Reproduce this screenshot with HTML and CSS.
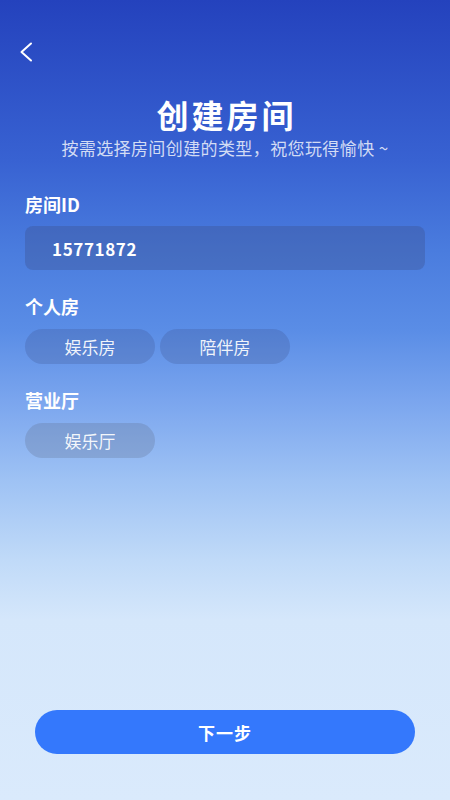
FILE: index.html
```html
<!DOCTYPE html>
<html lang="zh-CN">
<head>
<meta charset="utf-8">
<title>创建房间</title>
<link rel="stylesheet" href="styles.css">
</head>
<body>
<div class="page">
  <div class="back">
    <svg width="14" height="20" viewBox="0 0 14 20"><path d="M12 1.5 L2.5 10 L12 18.5" fill="none" stroke="#fff" stroke-width="2" stroke-linecap="round" stroke-linejoin="round"/></svg>
  </div>
  <h1 class="title">创建房间</h1>
  <p class="subtitle">按需选择房间创建的类型，祝您玩得愉快 ~</p>

  <div class="section">
    <div class="label">房间ID</div>
    <div class="input">15771872</div>
  </div>

  <div class="section s2">
    <div class="label">个人房</div>
    <div class="chips">
      <div class="chip">娱乐房</div>
      <div class="chip">陪伴房</div>
    </div>
  </div>

  <div class="section s2">
    <div class="label">营业厅</div>
    <div class="chips">
      <div class="chip chip-muted">娱乐厅</div>
    </div>
  </div>

  <div class="footer">
    <button class="next">下一步</button>
  </div>
</div>
</body>
</html>
```

FILE: styles.css
```css
* { box-sizing: border-box; }
html, body { margin: 0; padding: 0; }
body {
  width: 450px;
  height: 800px;
  overflow: hidden;
  font-family: "Noto Sans CJK SC", "Noto Sans", sans-serif;
  color: #fff;
  background: linear-gradient(180deg,
    #2442bd 0px,
    #3862d2 160px,
    #4a7cde 250px,
    #5a8de6 330px,
    #7aa5ee 400px,
    #9ec2f4 480px,
    #c0daf8 560px,
    #d5e7fb 620px,
    #daeafc 800px);
}
.page {
  height: 800px;
  display: flex;
  flex-direction: column;
}
.back {
  margin-top: 42px;
  margin-left: 19px;
  height: 20px;
  width: 14px;
}
.back svg { display: block; }
.title {
  margin: 32px 0 0;
  text-align: center;
  font-size: 32px;
  line-height: 40px;
  font-weight: 700;
  letter-spacing: 3px;
  padding-left: 3px;
}
.subtitle {
  margin: 2px 0 0;
  text-align: center;
  font-size: 17px;
  line-height: 24px;
  letter-spacing: 0.4px;
  color: rgba(255, 255, 255, 0.78);
}
.section {
  margin-top: 32px;
  padding: 0 25px;
}
.section.s2 { margin-top: 24px; }
.label {
  font-size: 18px;
  line-height: 24px;
  font-weight: 700;
}
.input {
  margin-top: 10px;
  height: 44px;
  border-radius: 8px;
  background: rgba(60, 80, 140, 0.35);
  padding-left: 27px;
  display: flex;
  align-items: center;
  font-size: 17px;
  font-weight: 700;
  letter-spacing: 0.6px;
}
.chips {
  margin-top: 11px;
  display: flex;
  gap: 5px;
}
.chip {
  width: 130px;
  height: 35px;
  border-radius: 18px;
  background: rgba(60, 80, 140, 0.25);
  display: flex;
  align-items: center;
  justify-content: center;
  font-size: 17px;
  color: rgba(255, 255, 255, 0.92);
}
.chip-muted {
  background: rgba(100, 115, 150, 0.3);
}
.footer {
  margin-top: auto;
  margin-bottom: 46px;
  padding: 0 35px;
}
.next {
  display: block;
  width: 100%;
  height: 44px;
  border: none;
  border-radius: 22px;
  background: #3478fc;
  color: #fff;
  font-family: "Noto Sans CJK SC", "Noto Sans", sans-serif;
  font-size: 17px;
  font-weight: 700;
  letter-spacing: 1px;
}
```
